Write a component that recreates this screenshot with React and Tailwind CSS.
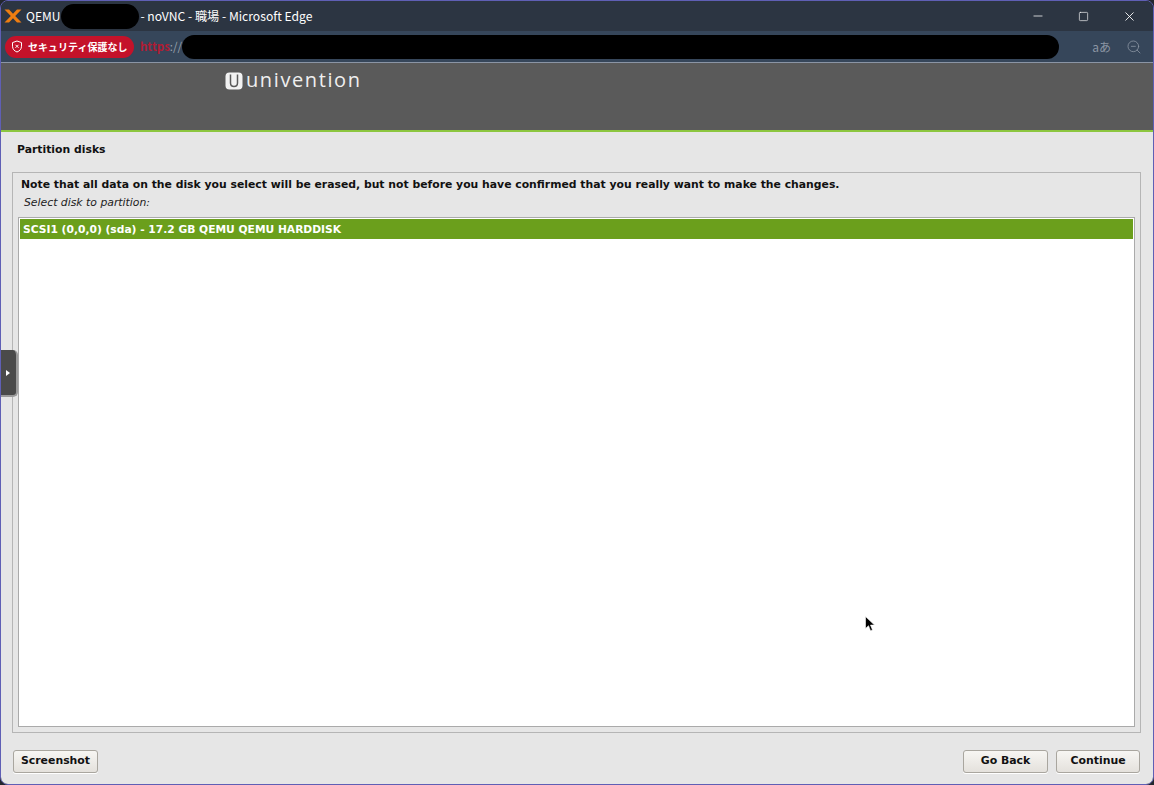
import { Minus, Square, X, ZoomOut } from "lucide-react"

const ui = "font-['Noto_Sans_CJK_JP','Noto_Sans',sans-serif]"
const dejavu = "font-['DejaVu_Sans',sans-serif]"

const InstallerButton = ({ label, className }) => (
  <button className={`h-[23px] rounded-[3px] border border-[#a9a69f] bg-gradient-to-b from-[#f7f6f3] to-[#e4e1dc] text-[10.9px] font-bold text-[#111] shadow-[0_1px_0_#fff] ${className}`}>
    {label}
  </button>
)

const App = () => {
  return (
    <div className="relative h-[785px] w-[1154px] overflow-hidden bg-[#23272e]">
      <div className={`flex h-full flex-col overflow-hidden rounded-[8px] border border-[#5f5fb5] ${dejavu}`}>
        {/* title bar */}
        <div className={`flex h-[30px] shrink-0 items-center bg-[#2c3542] pl-[3px] text-white ${ui}`}>
          <svg width="18" height="14" viewBox="0 0 18 14" className="shrink-0">
            <path d="M0.500 0.500h4.500l4 4.300 4-4.300h4.500L11.200 7l6.300 6.500H13L9 9.200l-4 4.300H0.500L6.800 7z" fill="#ee7d11" />
          </svg>
          <span className="ml-[4px] text-[12px]">QEMU</span>
          <div className="ml-[1px] h-[25px] w-[78px] shrink-0 rounded-full bg-black" />
          <span className="ml-px text-[12.15px]">- noVNC - 職場 - Microsoft Edge</span>
          <div className="ml-auto flex items-center">
            <Minus size={14} strokeWidth={1.3} className="mr-[33px]" />
            <Square size={11} strokeWidth={1.4} className="mr-[33px]" />
            <X size={15} strokeWidth={1.4} className="mr-[16px]" />
          </div>
        </div>

        {/* address bar */}
        <div className={`flex h-[32px] shrink-0 items-center border-b border-[#8b95a5] bg-[#36465a] pl-[4px] ${ui}`}>
          <div className="flex h-[22px] w-[129px] shrink-0 items-center rounded-full bg-[#c4122a] pl-[6px] text-white">
            <svg width="12" height="13" viewBox="0 0 12 13" fill="none" stroke="white" strokeWidth="1" className="shrink-0">
              <path d="M6 1l4.500 1.600v3.600c0 3-2 4.900-4.500 5.800-2.500-.9-4.500-2.800-4.500-5.800V2.600z" />
              <path d="M4.500 4.800l3 3M7.500 4.800l-3 3" />
            </svg>
            <span className="ml-[5px] whitespace-nowrap text-[10px] font-bold">セキュリティ保護なし</span>
          </div>
          <span className="ml-[6px] text-[11.5px] font-bold text-[#b01c34]">https</span>
          <span className="text-[11.5px] text-[#9aa3ae]">://</span>
          <div className="h-[24px] w-[877px] shrink-0 rounded-full bg-black" />
          <div className="ml-auto flex items-center text-[#8b95a3]">
            <span className="mr-[15px] text-[12px]">aあ</span>
            <ZoomOut size={16} strokeWidth={1.2} className="mr-[11px]" />
          </div>
        </div>

        {/* univention header */}
        <div className="flex h-[69px] shrink-0 items-start border-b-2 border-[#8cc63f] bg-[#5a5a5a] pl-[224px] pt-[8px]">
          <div className="flex items-center text-white">
            <svg width="18" height="18" viewBox="0 0 18 18" className="shrink-0">
              <rect x="0.500" y="0.500" width="17" height="17" rx="4" fill="#f2f2f2" />
              <path d="M5.500 2.500v8.500c0 2.300 1.400 3.500 3.500 3.500s3.500-1.200 3.500-3.500V2.500" fill="none" stroke="#5a5a5a" strokeWidth="1.500" />
            </svg>
            <span className="ml-[3px] -mt-[2px] font-['Open_Sans',sans-serif] text-[20px] leading-[22px] tracking-[1.6px] text-[#efefef]">univention</span>
          </div>
        </div>

        {/* installer body */}
        <div className="flex min-h-0 flex-1 flex-col bg-[#e6e6e6] pb-[11px] pl-[11px] pr-[12px]">
          <h1 className="ml-[5px] mt-[10px] h-[30px] text-[10.83px] leading-[16px] font-bold text-[#111]">Partition disks</h1>
          <div className="flex min-h-0 flex-1 flex-col border border-[#b5b5b5] px-[5px] pb-[5px]">
            <p className="ml-[3px] mt-[4px] text-[10.83px] leading-[16px] font-bold text-[#111]">
              Note that all data on the disk you select will be erased, but not before you have confirmed that you really want to make the changes.
            </p>
            <p className="ml-[6px] mt-[2px] text-[10.83px] leading-[16px] text-[#222] italic">Select disk to partition:</p>
            <div className="mt-[6px] min-h-0 flex-1 border border-[#aaaaaa] bg-white p-px">
              <div className="h-[20px] bg-[#6b9f1c] pl-[3px] text-[10.7px] leading-[21px] font-bold text-white">
                SCSI1 (0,0,0) (sda) - 17.2 GB QEMU QEMU HARDDISK
              </div>
            </div>
          </div>
          <div className="mt-[17px] flex shrink-0 items-center pl-px pr-px">
            <InstallerButton label="Screenshot" className="w-[85px]" />
            <InstallerButton label="Go Back" className="ml-auto w-[85px]" />
            <InstallerButton label="Continue" className="ml-[8px] w-[84px]" />
          </div>
        </div>
      </div>

      {/* noVNC side handle */}
      <div className="absolute left-px top-[350px] flex h-[47px] w-[17px] items-center rounded-r-[5px] border-r-2 border-b-2 border-[#9a9a9a] bg-[#4a4a4a] pl-[5px]">
        <div className="h-0 w-0 border-y-[3px] border-l-[4px] border-y-transparent border-l-white" />
      </div>

      {/* mouse cursor */}
      <svg width="10" height="16" viewBox="0 0 10 16" className="absolute left-[865px] top-[616px]">
        <path d="M0.500 0.500v12l3-2.800 2 5 2-.8-2-4.800h4z" fill="#000" stroke="#fff" strokeWidth="0.600" />
      </svg>
    </div>
  )
}

export default App
